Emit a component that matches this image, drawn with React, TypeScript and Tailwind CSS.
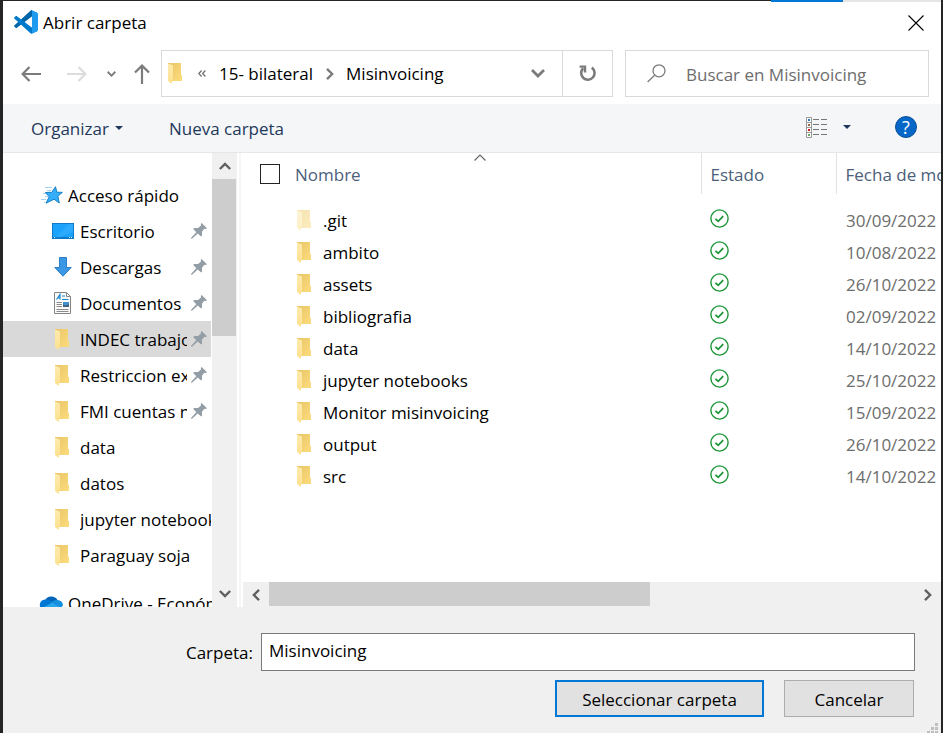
import React from "react";

type IconProps = { className?: string };

type Place = {
  name: string;
  icon: "desktop" | "download" | "document" | "folder";
  pinned?: boolean;
  selected?: boolean;
};

const places: Place[] = [
  { name: "Escritorio", icon: "desktop", pinned: true },
  { name: "Descargas", icon: "download", pinned: true },
  { name: "Documentos", icon: "document", pinned: true },
  { name: "INDEC trabajo", icon: "folder", pinned: true, selected: true },
  { name: "Restriccion externa", icon: "folder", pinned: true },
  { name: "FMI cuentas nacionales", icon: "folder", pinned: true },
  { name: "data", icon: "folder" },
  { name: "datos", icon: "folder" },
  { name: "jupyter notebooks", icon: "folder" },
  { name: "Paraguay soja", icon: "folder" },
];

const files = [
  { name: ".git", date: "30/09/2022", hidden: true },
  { name: "ambito", date: "10/08/2022" },
  { name: "assets", date: "26/10/2022" },
  { name: "bibliografia", date: "02/09/2022" },
  { name: "data", date: "14/10/2022" },
  { name: "jupyter notebooks", date: "25/10/2022" },
  { name: "Monitor misinvoicing", date: "15/09/2022" },
  { name: "output", date: "26/10/2022" },
  { name: "src", date: "14/10/2022" },
];

function CodeLogo() {
  return (
    <svg viewBox="0 0 100 100" className="size-6 shrink-0" aria-hidden="true">
      <mask id="code-shape" maskUnits="userSpaceOnUse" x="0" y="0" width="100" height="100">
        <path
          fill="#fff"
          fillRule="evenodd"
          d="M70.9119 99.3171C72.4869 99.9307 74.2828 99.8914 75.8725 99.1264L96.4608 89.2197C98.6242 88.1787 100 85.9892 100 83.5872V16.4133C100 14.0113 98.6243 11.8218 96.4609 10.7808L75.8725 0.873756C73.7862 -0.130129 71.3446 0.11576 69.5135 1.44695C69.252 1.63711 69.0028 1.84943 68.769 2.08341L29.3551 38.0415L12.1872 25.0096C10.589 23.7965 8.35363 23.8959 6.86933 25.2461L1.36303 30.2549C-0.452552 31.9064 -0.454633 34.7627 1.35853 36.417L16.2471 50.0001L1.35853 63.5832C-0.454633 65.2374 -0.452552 68.0938 1.36303 69.7453L6.86933 74.7541C8.35363 76.1043 10.589 76.2037 12.1872 74.9905L29.3551 61.9587L68.769 97.9167C69.3925 98.5406 70.1246 99.0104 70.9119 99.3171ZM75.0152 27.2989L45.1091 50.0001L75.0152 72.7012V27.2989Z"
        />
      </mask>
      <g mask="url(#code-shape)">
        <path
          fill="#0065A9"
          d="M96.4614 10.7962L75.8569 0.875542C73.4719 -0.272773 70.6217 0.211611 68.75 2.08333L1.29858 63.5832C-0.515693 65.2373 -0.513607 68.0937 1.30308 69.7452L6.81272 74.754C8.29793 76.1042 10.5347 76.2036 12.1338 74.9905L93.3609 13.3699C96.086 11.3026 100 13.2462 100 16.6667V16.4275C100 14.0265 98.6246 11.8378 96.4614 10.7962Z"
        />
        <path
          fill="#007ACC"
          d="M96.4614 89.2038L75.8569 99.1245C73.4719 100.273 70.6217 99.7884 68.75 97.9167L1.29858 36.4169C-0.515693 34.7627 -0.513607 31.9063 1.30308 30.2548L6.81272 25.246C8.29793 23.8958 10.5347 23.7964 12.1338 25.0095L93.3609 86.6301C96.086 88.6974 100 86.7538 100 83.3334V83.5726C100 85.9735 98.6246 88.1622 96.4614 89.2038Z"
        />
        <path
          fill="#1F9CF0"
          d="M75.8578 99.1263C73.4721 100.274 70.6219 99.7885 68.75 97.9166C71.0564 100.223 75 98.5895 75 95.3278V4.67213C75 1.41039 71.0564 -0.223106 68.75 2.08329C70.6219 0.211402 73.4721 -0.273666 75.8578 0.873633L96.4587 10.7807C98.6234 11.8217 100 14.0112 100 16.4132V83.5871C100 85.9891 98.6234 88.1786 96.4586 89.2196L75.8578 99.1263Z"
        />
      </g>
    </svg>
  );
}

function Folder({ className = "" }: IconProps) {
  return (
    <svg viewBox="0 0 14 21" className={`h-[21px] w-[14px] shrink-0 ${className}`} aria-hidden="true">
      <defs>
        <linearGradient id="folder-back" x1="0" y1="0" x2="1" y2="1">
          <stop offset="0" stopColor="#e9c566" />
          <stop offset="1" stopColor="#fcdc7e" />
        </linearGradient>
        <linearGradient id="folder-front" x1="0" y1="0" x2="0" y2="1">
          <stop offset="0" stopColor="#fdeaae" />
          <stop offset="1" stopColor="#fee18d" />
        </linearGradient>
      </defs>
      <path fill="url(#folder-back)" d="M0 0H13V11.5L14 12.5V18H3L0 3Z" />
      <path fill="url(#folder-front)" d="M0 0.6L5 2.6V16.5L4 17.5V21L0 18Z" />
    </svg>
  );
}

function Arrow({ className = "" }: IconProps) {
  return (
    <svg viewBox="0 0 20 16" className={`h-4 w-5 shrink-0 ${className}`} fill="none" stroke="currentColor" strokeWidth="2.2" aria-hidden="true">
      <path d="M20 8H2M8.5 1L1.6 8L8.5 15" />
    </svg>
  );
}

function Chevron({ className = "" }: IconProps) {
  return (
    <svg viewBox="0 0 14 9" className={`shrink-0 ${className}`} fill="none" stroke="currentColor" strokeWidth="2.8" aria-hidden="true">
      <path d="M1 1L7 7L13 1" />
    </svg>
  );
}

function Caret() {
  return (
    <svg viewBox="0 0 8 4" className="h-1 w-2 shrink-0" aria-hidden="true">
      <path fill="#1e395b" d="M0 0H8L4 4Z" />
    </svg>
  );
}

function Star() {
  return (
    <svg viewBox="0 0 22 18" className="h-[18px] w-[22px] shrink-0" aria-hidden="true">
      <g stroke="#a5d3f3" strokeWidth="1">
        <path d="M4 1.5H11M6 4.5H10M2 7.5H5M4 10.5H7M0 13.5H5M3 16.5H4" />
      </g>
      <path
        fill="#35aefc"
        stroke="#1580c8"
        strokeWidth="1"
        strokeLinejoin="round"
        d="M14.5 0.7L15.8 6.2L21.4 6.4L16.8 10L18.3 17L13 13.2L5 17.2L8.2 10.7L4.5 6.5L10.8 6.3Z"
      />
    </svg>
  );
}

function Desktop() {
  return (
    <svg viewBox="0 0 22 16" className="h-4 w-[22px] shrink-0" aria-hidden="true">
      <rect width="22" height="16" fill="#0f7ac9" />
      <path fill="#1aa2fd" d="M1 1H21V14H1Z" />
      <path fill="#38b1ff" d="M21 1V9L8 14H4L17 1Z" opacity=".6" />
      <path stroke="#d9efff" d="M2 14.5H3M17 14.5H18M19 14.5H20" />
    </svg>
  );
}

function Download() {
  return (
    <svg viewBox="0 0 18 20" className="h-5 w-[18px] shrink-0" aria-hidden="true">
      <path fill="#3c97e4" stroke="#2b7fca" d="M5.5 0.5H12.5V10.5H17.2L9 19.2L0.8 10.5H5.5Z" />
    </svg>
  );
}

function Document() {
  return (
    <svg viewBox="0 0 18 22" className="h-[22px] w-[18px] shrink-0" fill="none" aria-hidden="true">
      <path fill="#fafafa" stroke="#858585" d="M0.5 0.5H12.5L16.5 4.5V21.5H0.5Z" />
      <path stroke="#858585" d="M12.5 0.5V4.5H16.5" />
      <path stroke="#1d87d0" strokeWidth="1.2" d="M2.5 7.5L6 2.5V7.5M3.5 6H6M8 4H11M8 7.5H14.5" />
      <path stroke="#8b8b8b" d="M2.5 10.5H8M2.5 12.5H8M2.5 14.5H8M2.5 17.5H14.5M2.5 19.5H14.5" />
      <rect x="9" y="10" width="6" height="5" fill="#3d8fce" />
      <path fill="#44607a" d="M9 15V12.5L11 13.5L15 12.5V15Z" />
    </svg>
  );
}

function Pin() {
  return (
    <svg viewBox="0 0 16 16" className="size-4 shrink-0" aria-hidden="true">
      <path
        fill="#929da5"
        d="M10.6 0L16 5.2L14.8 6L13.4 5.8L10.9 8.7L11.1 12.6L10.2 13.6L6.7 10.6L1.3 15.6L0 16L0.4 14.6L5.3 9.2L2.2 5.9L3.2 4.9L7 5.1L10 2.5L9.8 1Z"
      />
    </svg>
  );
}

function Cloud() {
  return (
    <svg viewBox="0 0 24 16" className="h-4 w-6 shrink-0" aria-hidden="true">
      <path fill="#0364b8" d="M6 5.5A7 7 0 0 1 18.5 5L15 10L7 9Z" />
      <path fill="#0078d4" d="M6 4.5C9 4.2 11 5.5 13 7L5 15.5A5.6 5.6 0 0 1 6 4.5Z" />
      <path fill="#1490df" d="M18.5 5A5.4 5.4 0 0 1 24 10.5L20 15L11 8.5C13 6 15.5 4.8 18.5 5Z" />
      <path fill="#28a8ea" d="M13 7.8L23 13.5Q22 16 19 16H6Q3 16 1.5 14Z" />
    </svg>
  );
}

function Check() {
  return (
    <svg viewBox="0 0 19 19" className="block size-[19px]" fill="none" stroke="#1d9639" role="img" aria-label="Disponible">
      <circle cx="9.5" cy="9.5" r="8.6" strokeWidth="1.4" />
      <path d="M5.4 9.8L8.2 12.3L13.2 7.2" strokeWidth="1.8" />
    </svg>
  );
}

function ViewIcon() {
  return (
    <svg viewBox="0 0 22 21" className="h-[21px] w-[22px]" fill="none" aria-hidden="true">
      <path fill="#fff" stroke="#999" d="M0.5 0.5H5.5V20.5H0.5ZM0.5 5.5H5.5M0.5 10.5H5.5M0.5 15.5H5.5" />
      <rect x="2" y="2" width="2" height="2" fill="#2f77b5" />
      <rect x="2" y="7" width="2" height="2" fill="#a0653c" />
      <rect x="2" y="12" width="2" height="2" fill="#d01818" />
      <rect x="2" y="17" width="2" height="2" fill="#6ea860" />
      <path stroke="#777" d="M7 2.5H13M15 2.5H21M7 7.5H13M15 7.5H21M7 12.5H13M15 12.5H21M7 17.5H13M15 17.5H21" />
    </svg>
  );
}

const placeIcons = {
  desktop: <Desktop />,
  download: <Download />,
  document: <Document />,
  folder: <Folder className="mr-0.5" />,
};

function TitleBar() {
  return (
    <header className="flex h-[49px] items-start justify-between pt-2 pr-[17px] pl-[11px]">
      <div className="flex items-center gap-[5px]">
        <CodeLogo />
        <h1 className="pt-0.5">Abrir carpeta</h1>
      </div>
      <button aria-label="Cerrar" className="flex size-7 items-center justify-end">
        <svg viewBox="0 0 16 16" className="size-4" stroke="#000" strokeWidth="1.1" aria-hidden="true">
          <path d="M0.5 0.5L15.5 15.5M15.5 0.5L0.5 15.5" />
        </svg>
      </button>
    </header>
  );
}

function AddressRow() {
  return (
    <div className="flex h-[54px] items-start pr-3">
      <div className="flex h-[47px] w-[158px] items-center pl-[18px] text-[#7b7b7b]">
        <button aria-label="Atrás">
          <Arrow />
        </button>
        <button aria-label="Adelante" disabled className="ml-[26px] text-[#dcdcdc]">
          <Arrow className="rotate-180" />
        </button>
        <button aria-label="Ubicaciones recientes" className="ml-5">
          <Chevron className="h-[6px] w-[9px]" />
        </button>
        <button aria-label="Subir" className="ml-4">
          <Arrow className="rotate-90" />
        </button>
      </div>
      <div className="flex h-[47px] flex-1 border border-[#d9d9d9]">
        <nav aria-label="Ruta" className="flex flex-1 items-center pl-[6px]">
          <Folder />
          <button aria-label="Anteriores" className="ml-4 text-[#6b6b6b]">
            <svg viewBox="0 0 8 7" className="h-[7px] w-2" fill="none" stroke="currentColor" strokeWidth="1.2" aria-hidden="true">
              <path d="M3.6 0.5L0.8 3.5L3.6 6.5M7.4 0.5L4.6 3.5L7.4 6.5" />
            </svg>
          </button>
          <button className="ml-[13px]">15- bilateral</button>
          <Chevron className="mr-[10px] ml-[11px] h-2 w-3 -rotate-90 text-[#7b7b7b]" />
          <button>Misinvoicing</button>
          <button aria-label="Ubicaciones anteriores" className="mr-[17px] ml-auto text-[#7b7b7b]">
            <Chevron className="h-[9px] w-[14px]" />
          </button>
        </nav>
        <button aria-label="Actualizar" className="flex w-[50px] items-center justify-center border-l border-[#d9d9d9]">
          <svg viewBox="0 0 17 17" className="size-[17px]" fill="none" stroke="#7b7b7b" strokeWidth="2.6" aria-hidden="true">
            <path d="M12.8 2.6A6.7 6.7 0 1 1 4.2 3.2" />
            <path d="M0.6 1.6H6V7.4" strokeWidth="2.4" />
          </svg>
        </button>
      </div>
      <label className="ml-3 flex h-[47px] w-[304px] items-center border border-[#d9d9d9] pl-[21px]">
        <svg viewBox="0 0 19 19" className="size-[19px] shrink-0" fill="none" stroke="#7d7d7d" strokeWidth="1.3" aria-hidden="true">
          <circle cx="12" cy="6.8" r="6" />
          <path d="M7.6 11.2L0.6 18" />
        </svg>
        <input
          type="search"
          aria-label="Buscar en Misinvoicing"
          placeholder="Buscar en Misinvoicing"
          className="ml-5 w-full min-w-0 pt-0.5 outline-none placeholder:text-[#6d6d6d]"
        />
      </label>
    </div>
  );
}

function Toolbar() {
  return (
    <div className="flex h-[49px] shrink-0 items-center border-b border-[#e4e8eb] bg-[#f4f6f8] pl-7 text-[#1e395b]">
      <button className="flex items-center gap-[6px]">
        <span className="pt-0.5">Organizar</span>
        <Caret />
      </button>
      <button className="ml-[46px] pt-0.5">Nueva carpeta</button>
      <div className="ml-auto flex items-center pr-6 pb-0.5">
        <button aria-label="Cambiar la vista">
          <ViewIcon />
        </button>
        <button aria-label="Más opciones" className="ml-[15px] flex h-5 items-center">
          <Caret />
        </button>
        <button
          aria-label="Ayuda"
          className="ml-11 flex size-[22px] items-center justify-center rounded-full border border-[#0b4f94] bg-[#0568c8] text-lg text-white"
        >
          ?
        </button>
      </div>
    </div>
  );
}

function Sidebar() {
  return (
    <aside className="flex w-[238px] shrink-0 border-r-2 border-[#f5f6f8] pr-[2px]">
      <div className="min-w-0 flex-1 overflow-hidden pt-6 pr-px">
        <a href="#rapido" className="flex h-9 items-center gap-[5px] pl-[38px]">
          <Star />
          <span className="pt-0.5">Acceso rápido</span>
        </a>
        <ul>
          {places.map((place) => (
            <li key={place.name}>
              <a
                href="#lugar"
                className={`flex h-9 items-center pr-1 pl-12 ${place.selected ? "bg-[#d9d9d9]" : ""} ${place.pinned ? "" : "-mr-1"}`}
              >
                <span className="flex w-6 shrink-0 justify-center">{placeIcons[place.icon]}</span>
                <span className="ml-[5px] min-w-0 flex-1 overflow-hidden pt-0.5 whitespace-nowrap">{place.name}</span>
                {place.pinned && (
                  <span className="ml-1">
                    <Pin />
                  </span>
                )}
              </a>
            </li>
          ))}
        </ul>
        <a href="#onedrive" className="mt-3 flex h-9 items-center gap-[5px] pl-9 whitespace-nowrap">
          <Cloud />
          <span className="pt-0.5">OneDrive - Económicas</span>
        </a>
      </div>
      <div className="flex w-[25px] flex-col bg-[#f0f0f0] text-[#606060]">
        <button aria-label="Desplazar arriba" className="flex h-[26px] shrink-0 items-center justify-center">
          <Chevron className="h-2 w-3 rotate-180" />
        </button>
        <div className="flex-1 pr-px">
          <div className="h-[39%] bg-[#cdcdcd]" />
        </div>
        <button aria-label="Desplazar abajo" className="flex h-[26px] shrink-0 items-center justify-center">
          <Chevron className="h-2 w-3" />
        </button>
      </div>
    </aside>
  );
}

function FileList() {
  return (
    <main className="flex min-w-0 flex-1 flex-col">
      <div className="min-h-0 flex-1 overflow-hidden">
        <table className="w-full table-fixed text-left">
          <thead className="text-[#4c607a]">
            <tr className="h-[41px]">
              <th className="relative p-0 font-normal">
                <label className="flex items-center gap-[15px] pl-[19px]">
                  <input type="checkbox" aria-label="Seleccionar todo" className="size-5 appearance-none border border-[#222] bg-white" />
                  <span className="pt-0.5">Nombre</span>
                </label>
                <svg viewBox="0 0 12 7" className="absolute top-px left-[233px] h-[7px] w-3" fill="none" stroke="#666" strokeWidth="1.2" aria-hidden="true">
                  <path d="M0.5 6.5L6 1L11.5 6.5" />
                </svg>
              </th>
              <th className="w-[135px] border-l border-[#e2e2e2] p-0 pt-0.5 pl-[9px] font-normal">Estado</th>
              <th className="w-[105px] overflow-hidden border-l border-[#e2e2e2] p-0 pt-0.5 pl-[9px] font-normal whitespace-nowrap">
                Fecha de modificación
              </th>
            </tr>
          </thead>
          <tbody>
            <tr className="h-[10px]" aria-hidden="true">
              <td colSpan={3} className="p-0" />
            </tr>
            {files.map((file) => (
              <tr key={file.name} className="h-8">
                <td className="p-0">
                  <div className="flex items-center gap-3 pl-14">
                    <Folder className={file.hidden ? "opacity-50" : ""} />
                    <span className="pt-0.5">{file.name}</span>
                  </div>
                </td>
                <td className="p-0 pb-1 pl-[9px]">
                  <Check />
                </td>
                <td className="overflow-hidden p-0 pt-0.5 pl-[10px] whitespace-nowrap text-[#6d6d6d]">{file.date}</td>
              </tr>
            ))}
          </tbody>
        </table>
      </div>
      <div className="ml-[2px] flex h-[25px] shrink-0 bg-[#f0f0f0] text-[#606060]">
        <button aria-label="Desplazar a la izquierda" className="flex w-[26px] items-center justify-center">
          <Chevron className="h-2 w-3 rotate-90" />
        </button>
        <div className="flex-1 pb-px">
          <div className="h-full w-[59%] bg-[#cdcdcd]" />
        </div>
        <button aria-label="Desplazar a la derecha" className="flex w-[26px] items-center justify-center">
          <Chevron className="h-2 w-3 -rotate-90" />
        </button>
      </div>
    </main>
  );
}

function Footer() {
  return (
    <footer className="relative h-[126px] shrink-0 bg-[#f0f0f0] pt-[26px] pr-[26px]">
      <div className="flex items-center">
        <label htmlFor="carpeta" className="w-[250px] pt-0.5 text-right">
          Carpeta:
        </label>
        <input
          id="carpeta"
          defaultValue="Misinvoicing"
          className="ml-2 h-[38px] min-w-0 flex-1 border border-[#7a7a7a] bg-white px-[7px] pb-1 outline-none"
        />
      </div>
      <div className="mt-[9px] flex justify-end gap-5 pr-px">
        <button className="h-[37px] w-[209px] border-2 border-[#0078d7] bg-[#e1e1e1] pt-0.5">Seleccionar carpeta</button>
        <button className="h-[37px] w-[130px] border border-[#adadad] bg-[#e1e1e1] pt-0.5">Cancelar</button>
      </div>
      <svg viewBox="0 0 11 10" className="absolute right-[3px] bottom-0 h-[10px] w-[11px]" fill="#bfbfbf" aria-hidden="true">
        <path d="M8 0H11V3H8ZM4 4H7V7H4ZM8 4H11V7H8ZM0 8H3V10H0ZM4 8H7V10H4ZM8 8H11V10H8Z" />
      </svg>
    </footer>
  );
}

export default function App() {
  return (
    <div className="flex h-screen flex-col bg-[#252526] pr-[2px] pl-[3px] font-['Open_Sans','Noto_Sans',sans-serif] text-[17px] leading-6 text-black">
      <div className="z-10 flex h-px shrink-0 justify-end">
        <div className="h-0.5 w-[72px] bg-[#0078d7]" />
        <div className="h-0.5 w-[98px] bg-[#e5e5e5]" />
      </div>
      <div className="flex min-h-0 flex-1 flex-col bg-white">
        <TitleBar />
        <AddressRow />
        <Toolbar />
        <div className="flex min-h-0 flex-1">
          <Sidebar />
          <FileList />
        </div>
        <Footer />
      </div>
    </div>
  );
}
